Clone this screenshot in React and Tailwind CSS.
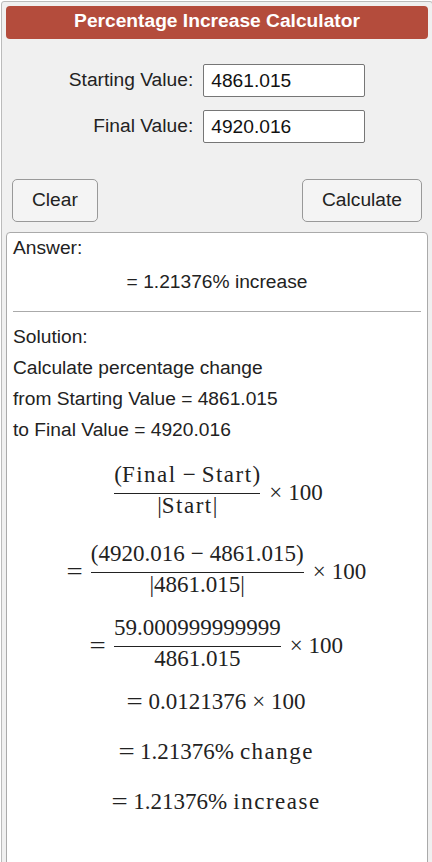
import React, { useState } from 'react';

const Frac = ({ num, den }) => (
  <div className="flex flex-col items-center px-[3px]">
    <div className="leading-[26px] pb-[5px] whitespace-nowrap">{num}</div>
    <div className="h-px w-full bg-[#222]" />
    <div className="leading-[24px] whitespace-nowrap">{den}</div>
  </div>
);

const Minus = () => <span className="mx-[6px]">−</span>;

const Word = ({ children }) => <span className="tracking-[1.5px]">{children}</span>;

const Times100 = () => (
  <>
    <span className="mt-[18px] leading-[26px] ml-[6px]">×</span>
    <span className="mt-[18px] leading-[26px] ml-[6px]">100</span>
  </>
);

const Eq = () => <span className="mt-[18px] leading-[26px] mr-[7px] scale-x-125">=</span>;

const App = () => {
  const [start, setStart] = useState('4861.015');
  const [final, setFinal] = useState('4920.016');

  return (
    <div className="h-[862px] overflow-hidden bg-white font-['Liberation_Sans',Arial,sans-serif] text-[19.2px] text-[#222]">
      <div className="ml-px mt-px w-[432px] min-h-[900px] border border-[#bbb] rounded-[3px] bg-[#f0f0f0] px-[4px] pt-[4px]">
        {/* Title bar */}
        <div className="h-[33px] leading-[30px] rounded-[4px] bg-[#b44c3c] text-white font-bold text-center">
          Percentage Increase Calculator
        </div>

        {/* Inputs */}
        <div className="mt-[25px] flex justify-center">
          <div className="grid grid-cols-[auto_auto] gap-x-[10px] gap-y-[13px] items-center">
            <label className="text-right whitespace-nowrap">Starting Value:</label>
            <input
              value={start}
              onChange={(e) => setStart(e.target.value)}
              className="w-[162px] h-[33px] border border-[#767676] rounded-[2px] bg-white px-[7px] text-[19.2px] text-[#111] outline-none"
            />
            <label className="text-right whitespace-nowrap">Final Value:</label>
            <input
              value={final}
              onChange={(e) => setFinal(e.target.value)}
              className="w-[162px] h-[33px] border border-[#767676] rounded-[2px] bg-white px-[7px] text-[19.2px] text-[#111] outline-none"
            />
          </div>
        </div>

        {/* Buttons */}
        <div className="mt-[36px] flex justify-between px-[6px]">
          <button className="h-[43px] px-[19px] border border-[#999] rounded-[5px] bg-[#f4f4f4] text-[#222]">Clear</button>
          <button className="h-[43px] px-[19px] border border-[#999] rounded-[5px] bg-[#f4f4f4] text-[#222]">Calculate</button>
        </div>

        {/* Result */}
        <div className="mt-[10px] bg-white border border-[#aaa] rounded-[4px] px-[6px] pb-[100px]">
          <div className="leading-[30.72px]">Answer:</div>
          <div className="mt-[3px] leading-[30.72px] text-center">= 1.21376% increase</div>
          <div className="mt-[14px] h-px bg-[#aaa]" />
          <div className="mt-[10px] leading-[30.72px]">
            <div>Solution:</div>
            <div>Calculate percentage change</div>
            <div>from Starting Value = 4861.015</div>
            <div>to Final Value = 4920.016</div>
          </div>

          <div className="font-['Liberation_Serif','Times_New_Roman',serif] text-[23px] text-[#222]">
            <div className="mt-[17px] flex justify-center items-start">
              <Frac num={<>(<Word>Final</Word><Minus /><Word>Start</Word>)</>} den={<>|<Word>Start</Word>|</>} />
              <Times100 />
            </div>

            <div className="mt-[23px] flex justify-center items-start">
              <Eq />
              <Frac num={<>(4920.016<Minus />4861.015)</>} den={<>|4861.015|</>} />
              <Times100 />
            </div>

            <div className="mt-[18px] flex justify-center items-start">
              <Eq />
              <Frac num="59.000999999999" den="4861.015" />
              <Times100 />
            </div>

            <div className="mt-[18px] flex justify-center leading-[26px] whitespace-nowrap">
              <span className="mr-[7px] scale-x-125">=</span>
              <span>0.0121376</span>
              <span className="mx-[6px]">×</span>
              <span>100</span>
            </div>

            <div className="mt-[24px] flex justify-center leading-[26px] whitespace-nowrap">
              <span className="mr-[7px] scale-x-125">=</span>
              <span>1.21376%</span>
              <span className="ml-[6px]"><Word>change</Word></span>
            </div>

            <div className="mt-[24px] flex justify-center leading-[26px] whitespace-nowrap">
              <span className="mr-[7px] scale-x-125">=</span>
              <span>1.21376%</span>
              <span className="ml-[6px]"><Word>increase</Word></span>
            </div>
          </div>
        </div>
      </div>
    </div>
  );
};

export default App;
